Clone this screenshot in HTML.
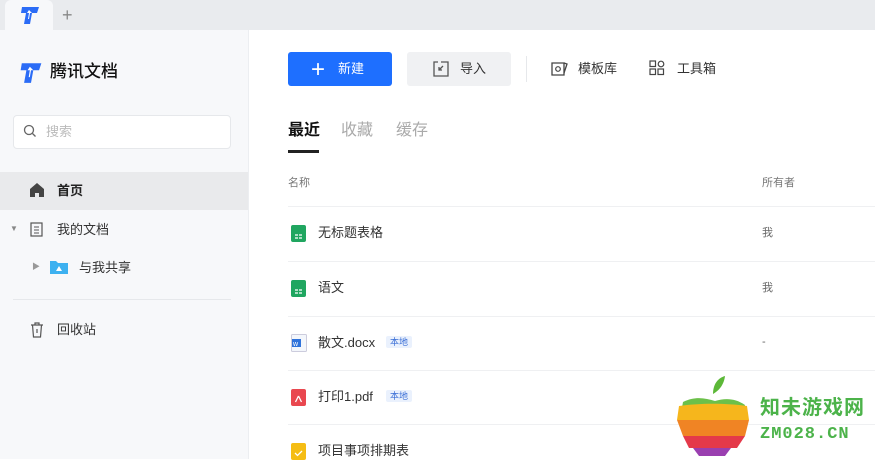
<!DOCTYPE html>
<html><head><meta charset="utf-8"><style>
*{margin:0;padding:0;box-sizing:border-box}
body{width:875px;height:459px;overflow:hidden;font-family:"Liberation Sans","Noto Sans CJK SC",sans-serif;background:#fff;position:relative;color:#333;line-height:1.35}
.a{position:absolute}
.tb{left:0;top:0;width:875px;height:30px;background:#e9ebee}
.tab{left:5px;top:0;width:48px;height:31px;background:#f7f8fa;border-radius:6px 6px 0 0}
.side{left:0;top:30px;width:249px;height:429px;background:#f7f8fa;border-right:1px solid #eceef1}
.t{font-size:13px;white-space:nowrap}
.sep{left:288px;width:587px;height:1px;background:#eff0f2}
.tag{font-size:9px;color:#3b6fd6;background:#eaf1fd;padding:0 4px;border-radius:2px}
</style></head><body>
<div class="a tb"></div>
<div class="a tab"></div>
<svg class="a" style="left:19px;top:5px" width="22" height="20" viewBox="0 0 22 20"><path d="M3 2h17l-2 6h-5l-2 11H5l2-11H2z" fill="#2b6cf6"/><path d="M10 5l3 3h-2l-1 6h-1l1-6H8z" fill="#fff"/></svg>
<div class="a" style="left:62px;top:3px;font-size:18px;color:#888">+</div>
<div class="a side"></div>
<svg class="a" style="left:18px;top:61px" width="26" height="23" viewBox="0 0 22 20"><path d="M3 2h17l-2 6h-5l-2 11H5l2-11H2z" fill="#2b6cf6"/><path d="M10 5l3 3h-2l-1 6h-1l1-6H8z" fill="#fff"/></svg>
<div class="a" style="left:50px;top:61px;font-size:17px;color:#111;font-weight:500">腾讯文档</div>
<div class="a" style="left:13px;top:115px;width:218px;height:34px;background:#fff;border:1px solid #e6e8eb;border-radius:4px"></div>
<svg class="a" style="left:23px;top:124px" width="14" height="14"><circle cx="6" cy="6" r="4.5" fill="none" stroke="#666" stroke-width="1.3"/><path d="M9.5 9.5l3 3" stroke="#666" stroke-width="1.3"/></svg>
<div class="a t" style="left:46px;top:123px;color:#bbb">搜索</div>
<div class="a" style="left:0;top:172px;width:248px;height:38px;background:#e9eaec"></div>
<svg class="a" style="left:29px;top:182px" width="16" height="16"><path d="M1 7l7-6 7 6v8H10v-4H6v4H1z" fill="#444"/></svg>
<div class="a t" style="left:57px;top:182px;font-weight:bold;color:#222">首页</div>
<div class="a" style="left:10px;top:224px;font-size:8px;color:#888">▼</div>
<svg class="a" style="left:30px;top:222px" width="14" height="16"><rect x="1" y="1" width="11" height="13" fill="none" stroke="#555" stroke-width="1.2"/><path d="M4 5h5M4 8h5M4 11h5" stroke="#555"/></svg>
<div class="a t" style="left:57px;top:221px">我的文档</div>
<div class="a" style="left:32px;top:262px;font-size:8px;color:#999">▶</div>
<svg class="a" style="left:50px;top:259px" width="18" height="15"><path d="M0 2h6l2 2h10v11H0z" fill="#3db1f0"/><path d="M9 7l3 5H6z" fill="#fff"/></svg>
<div class="a t" style="left:79px;top:259px">与我共享</div>
<div class="a" style="left:13px;top:299px;width:218px;height:1px;background:#e6e8eb"></div>
<svg class="a" style="left:30px;top:322px" width="14" height="16"><path d="M1 3h12M5 3V1h4v2M2.5 3l1 12h7l1-12M7 7v4" fill="none" stroke="#555" stroke-width="1.2"/></svg>
<div class="a t" style="left:57px;top:321px">回收站</div>

<div class="a" style="left:288px;top:52px;width:104px;height:34px;background:#1e6fff;border-radius:3px"></div>
<div class="a" style="left:311px;top:54px;font-size:24px;color:#fff;font-weight:300">+</div>
<div class="a t" style="left:338px;top:60px;color:#fff">新建</div>
<div class="a" style="left:407px;top:52px;width:104px;height:34px;background:#f0f1f3;border-radius:3px"></div>
<svg class="a" style="left:433px;top:61px" width="16" height="16"><path d="M5 1H1v14h14V8M8 1h7v7" fill="none" stroke="#555" stroke-width="1.3"/><path d="M10 5l-4 4M6 6v3h3" fill="none" stroke="#555" stroke-width="1.3"/></svg>
<div class="a t" style="left:460px;top:60px">导入</div>
<div class="a" style="left:526px;top:56px;width:1px;height:26px;background:#e6e8eb"></div>
<svg class="a" style="left:551px;top:60px" width="18" height="17"><path d="M1 3h12v12H1z" fill="none" stroke="#444" stroke-width="1.3"/><circle cx="7" cy="9" r="2.3" fill="none" stroke="#444" stroke-width="1.2"/><path d="M13 3l3 1-3 9" fill="none" stroke="#444" stroke-width="1.3"/></svg>
<div class="a t" style="left:578px;top:60px">模板库</div>
<svg class="a" style="left:649px;top:60px" width="16" height="16"><rect x="1" y="1" width="5.5" height="5.5" fill="none" stroke="#444" stroke-width="1.2"/><circle cx="12" cy="4" r="2.8" fill="none" stroke="#444" stroke-width="1.2"/><rect x="1" y="9" width="5.5" height="5.5" fill="none" stroke="#444" stroke-width="1.2"/><rect x="9" y="9" width="5.5" height="5.5" fill="none" stroke="#444" stroke-width="1.2"/></svg>
<div class="a t" style="left:677px;top:60px">工具箱</div>

<div class="a" style="left:288px;top:120px;font-size:16px;color:#111;font-weight:bold">最近</div>
<div class="a" style="left:341px;top:120px;font-size:16px;color:#aaa">收藏</div>
<div class="a" style="left:396px;top:120px;font-size:16px;color:#aaa">缓存</div>
<div class="a" style="left:288px;top:150px;width:31px;height:3px;background:#222"></div>
<div class="a" style="left:288px;top:176px;font-size:11px;color:#777">名称</div>
<div class="a" style="left:762px;top:176px;font-size:11px;color:#777">所有者</div>
<div class="a sep" style="top:206px"></div>

<svg class="a" style="left:291px;top:225px" width="15" height="17"><rect width="15" height="17" rx="2" fill="#20a660"/><path d="M4 10h3M8 10h3M4 13h3M8 13h3" stroke="#fff" stroke-width="1.2"/></svg>
<div class="a t" style="left:318px;top:224px">无标题表格</div>
<div class="a" style="left:762px;top:226px;font-size:11px;color:#666">我</div>
<div class="a sep" style="top:261px"></div>
<svg class="a" style="left:291px;top:280px" width="15" height="17"><rect width="15" height="17" rx="2" fill="#20a660"/><path d="M4 10h3M8 10h3M4 13h3M8 13h3" stroke="#fff" stroke-width="1.2"/></svg>
<div class="a t" style="left:318px;top:279px">语文</div>
<div class="a" style="left:762px;top:281px;font-size:11px;color:#666">我</div>
<div class="a sep" style="top:316px"></div>
<svg class="a" style="left:291px;top:334px" width="16" height="18"><rect x="0.5" y="0.5" width="15" height="17" rx="1" fill="#f3f6fb" stroke="#ccd"/><rect x="1" y="5" width="9" height="8" fill="#2f73db"/><text x="2" y="12" font-size="7" fill="#fff" font-family="Liberation Sans">w</text></svg>
<div class="a t" style="left:318px;top:334px">散文.docx</div>
<div class="a tag" style="left:386px;top:336px">本地</div>
<div class="a" style="left:762px;top:335px;font-size:11px;color:#666">-</div>
<div class="a sep" style="top:370px"></div>
<svg class="a" style="left:291px;top:389px" width="15" height="17"><rect width="15" height="17" rx="2" fill="#e9474f"/><path d="M7.5 7l3 6M7.5 7l-3 6" stroke="#fff" stroke-width="1.3"/></svg>
<div class="a t" style="left:318px;top:388px">打印1.pdf</div>
<div class="a tag" style="left:386px;top:390px">本地</div>
<div class="a sep" style="top:424px"></div>
<svg class="a" style="left:291px;top:443px" width="15" height="17"><rect width="15" height="17" rx="2" fill="#f5bd14"/><path d="M4 10l2.5 2.5L11 8" stroke="#fff" stroke-width="1.3" fill="none"/></svg>
<div class="a t" style="left:318px;top:442px">项目事项排期表</div>

<svg class="a" style="left:675px;top:372px" width="80" height="87" viewBox="0 0 80 87"><path d="M38 22c0-10 5-16 12-18-1 8-5 14-12 18z" fill="#5cb838"/><path d="M8 30c12-6 22-4 32-1 10-3 20-3 30 4l-2 8H6z" fill="#6cc04a"/><path d="M4 34c20-3 48-3 68 0l2 14H2z" fill="#f6b61c"/><path d="M2 48h72l-4 16H8z" fill="#f08424"/><path d="M8 64h62l-8 12H14z" fill="#e4394a"/><path d="M18 76h38l-6 8H24z" fill="#9a3fb0"/></svg>
<div class="a" style="left:760px;top:395px;font-size:20px;font-weight:bold;color:#4cb34a;letter-spacing:1px">知未游戏网</div>
<div class="a" style="left:760px;top:424px;font-size:17px;font-weight:bold;color:#4cb34a;font-family:'Liberation Mono',monospace;letter-spacing:1px">ZM028.CN</div>
</body></html>
